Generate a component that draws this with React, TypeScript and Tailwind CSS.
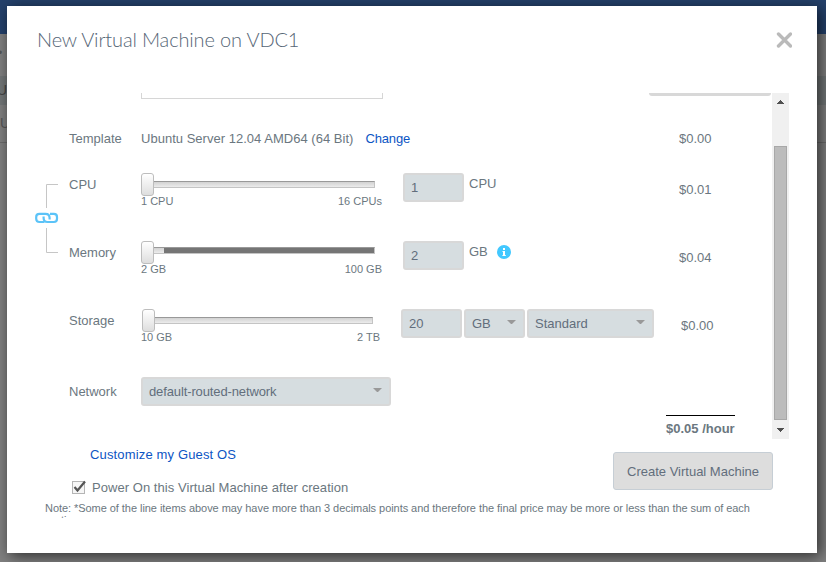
import type { ReactNode } from 'react';

function Track({ width, offset, inset, min, max, labelWidth, limited }: {
  width: string; offset: string; inset: string; min: string; max: string; labelWidth: string; limited?: boolean;
}) {
  return (
    <div className="w-[262px] shrink-0">
      <div className={`flex h-[23px] ${width} ${inset}`}>
        <div className="h-[23px] w-[13px] shrink-0 rounded-[3px] border border-[#bdbdbd] bg-gradient-to-b from-white to-[#dedede]" />
        <div className={`flex h-[7px] grow border border-l-0 border-[#c4c4c4] border-t-[#999] bg-gradient-to-b from-[#d2d2d2] to-[#ececec] ${offset}`}>
          {limited && <div className="ml-[10px] h-[5px] grow bg-[#757575]" />}
        </div>
      </div>
      <div className={`flex justify-between text-[11px] leading-[11px] ${labelWidth}`}>
        <span>{min}</span>
        <span>{max}</span>
      </div>
    </div>
  );
}

function Field({ children, width, arrow }: { children: ReactNode; width: string; arrow?: boolean }) {
  return (
    <div className={`flex h-[29px] shrink-0 justify-between rounded-[3px] border-2 border-[#d8d8d8] bg-[#d6dde0] pr-[7px] pl-[6px] leading-[25px] text-[#626e7c] ${width}`}>
      <span>{children}</span>
      {arrow && (
        <svg className="mt-[9px]" width="9" height="5" viewBox="0 0 9 5">
          <path d="M0 0h9L5 4H4z" fill="#999" />
        </svg>
      )}
    </div>
  );
}

function Row({ label, price, pricePad, children }: { label: string; price?: string; pricePad?: string; children: ReactNode }) {
  return (
    <div className="flex h-[68px] pl-8">
      <div className="w-[72px] shrink-0 pt-1">{label}</div>
      <div className="flex w-[538px] shrink-0 items-start">{children}</div>
      <div className={`pt-[9px] ${pricePad ?? ''}`}>{price}</div>
    </div>
  );
}

function LinkGroup() {
  return (
    <svg className="absolute top-[90px] -left-[3px]" width="28" height="71" viewBox="0 0 28 71">
      <path d="M24 1.500H12.500V25M12.500 45V69.500H24" fill="none" stroke="#c6c6c6" />
      <g fill="none" stroke="#5bc3f8" strokeWidth="2.200">
        <path d="M10.500 39H5.500Q2.200 39 2.200 35.700V34Q2.200 30.900 5.500 30.900H11.500Q15.600 30.900 15.600 35V36.500" />
        <path d="M9.600 33.500V35Q9.600 39 13.500 39H19.800Q23 39 23 35.700V34Q23 30.900 19.800 30.900H16" />
      </g>
    </svg>
  );
}

function Scrollbar() {
  return (
    <div className="flex h-[346px] w-[17px] shrink-0 flex-col items-center bg-[#f0f0f0]">
      <svg className="mt-[7px]" width="7" height="4" viewBox="0 0 7 4">
        <path d="M3 0h1v1h1v1h1v1h1v1H0V3h1V2h1V1h1z" fill="#505050" />
      </svg>
      <div className="mt-[42px] h-[274px] w-[13px] border border-[#a8a8a8] bg-[#bcbcbc]" />
      <svg className="mt-[8px]" width="7" height="4" viewBox="0 0 7 4">
        <path d="M0 0h7v1H6v1H5v1H4v1H3V3H2V2H1V1H0z" fill="#505050" />
      </svg>
    </div>
  );
}

export default function App() {
  return (
    <div className="relative h-[562px] w-[826px] overflow-hidden bg-[#808080] font-['Liberation_Sans',Arial,sans-serif] text-[13px] leading-4 text-[#6b7780]">
      <div className="h-[34px] bg-[#24416b]" />
      <div className="h-[42px] pt-[11px] -indent-[2px] text-[12px] text-[#555]">•</div>
      <div className="h-[29px] -indent-[3px] bg-[#737778] pt-[6px] text-[14px] text-[#444]">U</div>
      <div className="h-[38px] border-b border-[#6b6b6b] pt-[10px] text-[14px] text-[#555]">U</div>

      <div className="absolute top-[6px] left-[7px] h-[547px] w-[810px] bg-white pl-[30px] shadow-[3px_3px_14px_rgba(0,0,0,0.65)]">
        <div className="flex h-[87px] justify-between pr-[25px]">
          <h1 className="pt-[20px] font-['Lato',sans-serif] text-[20px] leading-[26px] font-light tracking-[-0.15px] text-[#566676]">New Virtual Machine on VDC1</h1>
          <svg className="mt-[26px]" width="16" height="16" viewBox="0 0 16 16">
            <path d="M2.500 2l12 12M14.500 2L2.500 14" stroke="#bababa" strokeWidth="3.400" strokeLinecap="round" />
          </svg>
        </div>

        <div className="relative flex h-[345px] w-[752px]">
          <div className="w-[735px]">
            <div className="flex h-[37px] items-start justify-between pl-[104px]">
              <div className="h-[6px] w-[242px] border border-t-0 border-[#d6d6d6]" />
              <div className="mr-[1px] h-[3px] w-[122px] rounded-b-[3px] bg-[#d8d8d8]" />
            </div>
            <div className="flex h-[43px] pt-px pl-8">
              <div className="w-[72px]">Template</div>
              <div className="flex w-[538px] gap-3">
                <span className="tracking-[0.02px]">Ubuntu Server 12.04 AMD64 (64 Bit)</span>
                <span className="tracking-[-0.15px] text-[#0c55c4]">Change</span>
              </div>
              <div>$0.00</div>
            </div>
            <Row label="CPU" price="$0.01">
              <Track width="w-[234px]" offset="mt-[8px]" inset="" labelWidth="w-[241px]" min="1 CPU" max="16 CPUs" />
              <Field width="w-[61px]">1</Field>
              <span className="ml-[5px] pt-[3px]">CPU</span>
            </Row>
            <Row label="Memory" price="$0.04">
              <Track width="w-[234px]" offset="mt-[6px]" inset="" labelWidth="w-[241px]" min="2 GB" max="100 GB" limited />
              <Field width="w-[61px]">2</Field>
              <span className="ml-[5px] pt-[3px]">GB</span>
              <svg className="mt-[4px] ml-[9px]" width="14" height="14" viewBox="0 0 14 14">
                <circle cx="7" cy="7" r="7" fill="#42c8ff" />
                <path d="M6 3h2v2H6zM5.500 6H8v4h.8v1H5.400v-1H6V7h-.5z" fill="#fff" />
              </svg>
            </Row>
            <Row label="Storage" price="$0.00" pricePad="pl-[2px]">
              <Track width="w-[231px]" offset="mt-[8px]" inset="ml-px" labelWidth="w-[239px]" min="10 GB" max="2 TB" />
              <div className="-ml-[2px] flex gap-[2px]">
                <Field width="w-[61px]">20</Field>
                <Field width="w-[61px]" arrow>GB</Field>
                <Field width="w-[127px]" arrow>Standard</Field>
              </div>
            </Row>
            <div className="flex h-[61px] pl-8">
              <div className="w-[72px] pt-[7px]">Network</div>
              <div className="w-[525px] tracking-[-0.12px]"><Field width="w-[250px]" arrow>default-routed-network</Field></div>
              <div className="mt-[38px] h-[23px] w-[69px] border-t border-black pt-[5px] font-bold whitespace-nowrap">$0.05 /hour</div>
            </div>
          </div>
          <Scrollbar />
          <div className="absolute top-0 left-0"><LinkGroup /></div>
        </div>

        <div className="flex h-[64px] w-[736px] justify-between">
          <div>
            <div className="pt-[9px] pl-[53px] tracking-[0.15px] text-[#0c55c4]">Customize my Guest OS</div>
            <div className="flex pt-[16px] pl-[35px]">
              <svg width="16" height="16" viewBox="0 0 16 16">
                <rect x=".5" y="2.500" width="12" height="12" fill="#f6f6f6" stroke="#b5b5b5" />
                <path d="M2.500 8l3 3.500L13 2.500" fill="none" stroke="#555" strokeWidth="2.200" />
              </svg>
              <span className="pt-px pl-[4px] tracking-[0.05px]">Power On this Virtual Machine after creation</span>
            </div>
          </div>
          <button className="mt-[14px] h-[38px] w-[160px] rounded-[3px] border border-[#c6ced5] bg-[#ddd] pt-px text-[#626e7c]">Create Virtual Machine</button>
        </div>
        <div className="ml-[8px] h-[16px] w-[730px] overflow-hidden text-[11px] leading-[12px] tracking-[-0.052px]">
          <div>Note: *Some of the line items above may have more than 3 decimals points and therefore the final price may be more or less than the sum of each</div>
          <div className="-ml-px">section</div>
        </div>
      </div>
    </div>
  );
}
